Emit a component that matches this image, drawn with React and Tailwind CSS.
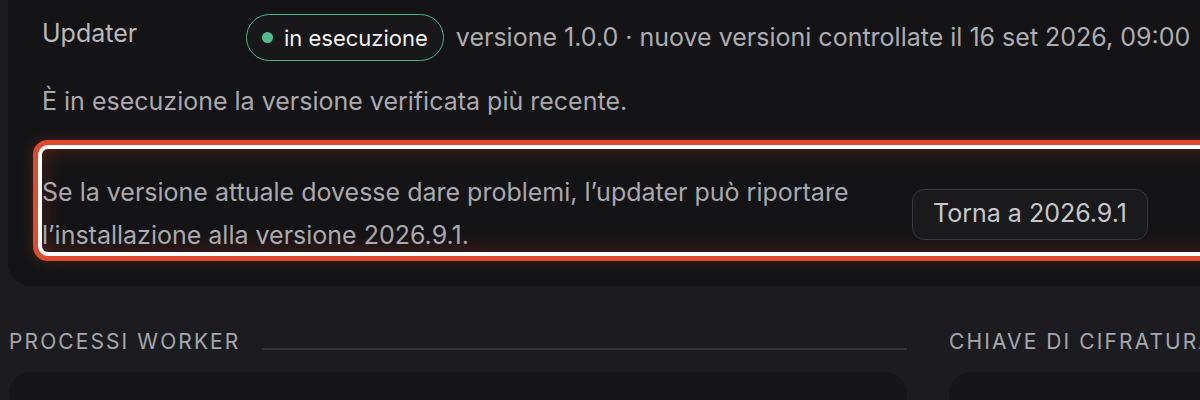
import React from 'react';

const SectionHeading = ({ title }) => (
  <div className="flex items-end gap-[22px] h-[28px]">
    <span className="text-[21px] leading-[28px] tracking-[0.1em] uppercase text-[#a4a7ae] whitespace-nowrap">
      {title}
    </span>
    <div className="flex-1 h-[2px] bg-[#333338] mb-[6px]" />
  </div>
);

export default function App() {
  return (
    <div
      className="w-[1200px] h-[400px] overflow-hidden bg-[#1c1c20] px-[8px]"
      style={{ fontFamily: 'Inter, "Noto Sans", sans-serif' }}
    >
      {/* Updater card */}
      <div className="w-[1400px] bg-[#141416] rounded-b-[22px] px-[34px] pt-[14px] pb-[34px]">
        <div className="flex items-start">
          <div className="w-[204px] text-[25px] leading-[38px] text-[#b9b9bd]">Updater</div>
          <div className="flex items-center gap-[12px]">
            <span className="flex items-center gap-[11px] h-[47px] pl-[15px] pr-[15px] rounded-full border-[1.5px] border-[#49b486] bg-[#18181b]">
              <span className="w-[11px] h-[11px] rounded-full bg-[#4cc08e]" />
              <span className="text-[22px] leading-none text-[#f2f2f3]">in esecuzione</span>
            </span>
            <span className="text-[25px] text-[#adadb2] whitespace-nowrap">
              versione 1.0.0 · nuove versioni controllate il 16 set 2026, 09:00
            </span>
          </div>
        </div>

        <p className="mt-[23px] text-[25px] leading-[34px] text-[#a9a9ae]">
          È in esecuzione la versione verificata più recente.
        </p>

        {/* Highlighted rollback row */}
        <div className="mt-[31px] h-[103px] pt-[22px] rounded-[6px] bg-[#141416] shadow-[0_0_0_4px_#ffffff,0_0_0_9px_#e04a2e,0_0_14px_9px_rgba(224,74,46,0.25),inset_0_0_22px_rgba(190,60,40,0.35)]">
          <div className="flex items-center gap-[48px]">
            <p className="w-[822px] text-[25px] leading-[43px] text-[#a9a9ae]">
              Se la versione attuale dovesse dare problemi, l’updater può riportare l’installazione alla versione 2026.9.1.
            </p>
            <button className="h-[51px] px-[20px] rounded-[12px] border border-[#38383d] bg-[#1a1a1d] text-[25px] text-[#c6c6ca] whitespace-nowrap">
              Torna a 2026.9.1
            </button>
          </div>
        </div>
      </div>

      {/* Lower sections */}
      <div className="flex gap-[42px] mt-[42px] pl-[1px]">
        <div className="w-[898px] shrink-0">
          <SectionHeading title="Processi worker" />
          <div className="mt-[16px] h-[120px] rounded-[22px] bg-[#161618]" />
        </div>
        <div className="w-[440px] shrink-0">
          <SectionHeading title="Chiave di cifratura" />
          <div className="mt-[16px] h-[120px] rounded-[22px] bg-[#161618]" />
        </div>
      </div>
    </div>
  );
}
